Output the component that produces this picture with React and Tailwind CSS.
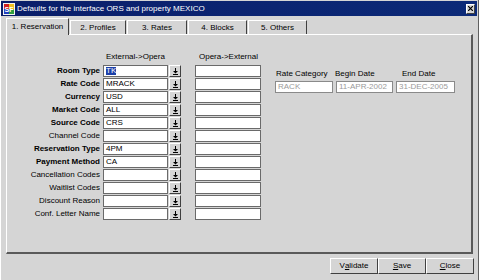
import React from "react";

const rows = [
  ["Room Type", "TK", true, true],
  ["Rate Code", "MRACK", true],
  ["Currency", "USD", true],
  ["Market Code", "ALL", true],
  ["Source Code", "CRS", true],
  ["Channel Code", "", false],
  ["Reservation Type", "4PM", true],
  ["Payment Method", "CA", true],
  ["Cancellation Codes", "", false],
  ["Waitlist Codes", "", false],
  ["Discount Reason", "", false],
  ["Conf. Letter Name", "", false],
];

function DropBtn() {
  return (
    <div className="w-[12px] h-[12px] ml-[1px] bg-[#d5d5d5] border-t border-l border-t-white border-l-white border-r border-b border-r-[#404040] border-b-[#404040] flex items-center justify-center">
      <svg width="5" height="7" viewBox="0 0 5 7">
        <rect x="2" y="0" width="1" height="3" fill="#000" />
        <path d="M0 3 H5 L2.5 5.5 Z" fill="#000" />
        <rect x="0" y="6" width="5" height="1" fill="#000" />
      </svg>
    </div>
  );
}

function Input({ w, value, selected, disabled }) {
  return (
    <div
      className={`h-[12px] bg-white border flex items-center pl-[2px] text-[8px] leading-none ${
        disabled ? "border-[#8a8a8a] text-[#9a9a9a]" : "border-[#6a6a6a] text-black"
      }`}
      style={{ width: w }}
    >
      {selected ? (
        <span className="bg-[#1c3fa8] text-white px-[0px]">{value}</span>
      ) : (
        value
      )}
    </div>
  );
}

const tabs = [
  ["1. Reservation", 63],
  ["2. Profiles", 56],
  ["3. Rates", 60],
  ["4. Blocks", 59],
  ["5. Others", 59],
];

export default function App() {
  return (
    <div className="w-[479px] h-[280px] bg-[#d5d5d5] overflow-hidden font-['Liberation_Sans',Arial,sans-serif] text-black text-[8px] border-l border-l-white border-r border-r-[#606060] flex flex-col">
      {/* title bar */}
      <div className="mt-[1px] mr-[1px] h-[15px] bg-gradient-to-r from-[#0a1e6a] to-[#0c2a78] flex items-center pl-[2px] pr-[2px]">
        <svg width="12" height="12" viewBox="0 0 12 12">
          <rect x="0" y="0" width="12" height="12" fill="#f4f4f4" />
          <rect x="1" y="1" width="5" height="5" fill="#d02020" />
          <rect x="6" y="1" width="5" height="5" fill="#f0c020" />
          <rect x="1" y="6" width="5" height="5" fill="#2040c0" />
          <rect x="6" y="6" width="5" height="5" fill="#30a040" />
          <text x="1.5" y="9" fontSize="7" fontWeight="bold" fill="#fff" fontFamily="Liberation Sans">SF</text>
        </svg>
        <span className="ml-[2px] text-white text-[8px] leading-none">
          Defaults for the interface ORS and property MEXICO
        </span>
        <div className="ml-auto w-[9px] h-[10px] bg-[#d5d5d5] border-t border-l border-t-white border-l-white border-r border-b border-r-[#404040] border-b-[#404040] flex items-center justify-center">
          <svg width="5" height="5" viewBox="0 0 5 5">
            <path d="M0 0 L5 5 M5 0 L0 5" stroke="#000" strokeWidth="1.2" />
          </svg>
        </div>
      </div>

      {/* tabs */}
      <div className="h-[17px] mt-[1px] pl-[5px] flex items-end gap-[1px] relative z-10">
        {tabs.map(([t, w], i) => (
          <div
            key={t}
            className={`flex items-center justify-center border-l border-t border-l-white border-t-white border-r border-r-[#404040] leading-none text-[8px] ${
              i === 0 ? "h-[17px] bg-[#d5d5d5] -mb-[1px] pb-[1px]" : "h-[14px] mb-0"
            }`}
            style={{ width: w }}
          >
            {t}
          </div>
        ))}
      </div>

      {/* panel */}
      <div className="ml-[5px] w-[467px] h-[220px] border-l border-t border-l-white border-t-white border-r-2 border-b-2 border-r-[#5a5a5a] border-b-[#5a5a5a] flex">
        <div className="flex flex-col pt-[16px]">
          <div className="flex h-[12px] items-center mb-[2px] leading-none">
            <div className="w-[96px]" />
            <div className="w-[93px] pl-[3px]">External-&gt;Opera</div>
            <div className="pl-[3px]">Opera-&gt;External</div>
          </div>
          <div className="flex flex-col gap-[1px]">
            {rows.map(([label, val, bold, sel]) => (
              <div key={label} className="flex items-center h-[12px]">
                <div
                  className={`w-[96px] pr-[3px] text-right leading-none ${
                    bold ? "font-bold" : ""
                  }`}
                >
                  {label}
                </div>
                <Input w={65} value={val} selected={sel} />
                <DropBtn />
                <div className="w-[14px]" />
                <Input w={66} value="" />
              </div>
            ))}
          </div>
        </div>
        <div className="flex flex-col pt-[33px] ml-[14px]">
          <div className="flex h-[12px] items-center leading-none">
            <div className="w-[60px] pl-[1px]">Rate Category</div>
            <div className="w-[60px]">Begin Date</div>
            <div className="pl-[7px]">End Date</div>
          </div>
          <div className="flex gap-[3px] mt-[1px]">
            <Input w={58} value="RACK" disabled />
            <Input w={57} value="11-APR-2002" disabled />
            <Input w={59} value="31-DEC-2005" disabled />
          </div>
        </div>
      </div>

      {/* buttons */}
      <div className="flex justify-end pr-[4px] mt-[4px]">
        {[
          ["V", "a", "lidate"],
          ["", "S", "ave"],
          ["", "C", "lose"],
        ].map(([a, u, b]) => (
          <div
            key={a + u + b}
            className="w-[48px] h-[16px] flex items-center justify-center leading-none text-[8px] border-t border-l border-t-white border-l-white border-r border-b border-r-[#404040] border-b-[#404040]"
          >
            {a}
            <span className="underline">{u}</span>
            {b}
          </div>
        ))}
      </div>
    </div>
  );
}
